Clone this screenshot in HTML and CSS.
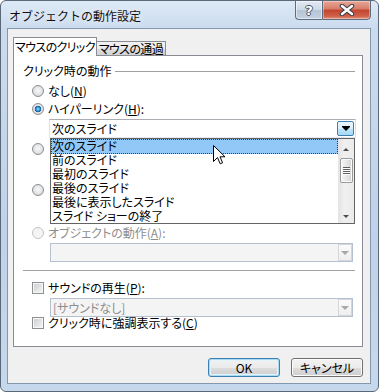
FILE: index.html
```html
<!DOCTYPE html>
<html lang="ja">
<head>
    <meta charset="UTF-8">
    <meta name="viewport" content="width=device-width, initial-scale=1.0">
    <title>オブジェクトの動作設定</title>
    <link rel="stylesheet" href="styles.css">
</head>
<body>
    <div class="window">
        <div class="titlebar">
            <span class="title">オブジェクトの動作設定</span>
            <div class="caption-buttons">
                <div class="cap-btn help">?</div>
                <div class="cap-btn close">
                    <svg width="16" height="12" viewBox="0 0 16 12">
                        <path d="M3 2 L13 10 M13 2 L3 10" stroke="#3a3f48" stroke-width="4.5" stroke-linecap="round"/>
                        <path d="M3 2 L13 10 M13 2 L3 10" stroke="#fff" stroke-width="2.4" stroke-linecap="round"/>
                    </svg>
                </div>
            </div>
        </div>

        <div class="client">
            <div class="tabs">
                <div class="tab active">マウスのクリック</div>
                <div class="tab">マウスの通過</div>
            </div>

            <div class="panel">
                <div class="group-head">
                    <span>クリック時の動作</span>
                    <span class="rule"></span>
                </div>

                <div class="option"><span class="radio"></span>なし(<u>N</u>)</div>
                <div class="option"><span class="radio checked"></span>ハイパーリンク(<u>H</u>):</div>
                <div class="combo focus">
                    <span class="combo-text">次のスライド</span>
                    <span class="combo-btn hot"><i class="arrow"></i></span>
                </div>

                <!-- these two rows sit under the open list -->
                <div class="option"><span class="radio"></span><span class="covered">プログラムの実行(R):</span></div>
                <div class="combo plain"></div>
                <div class="option"><span class="radio"></span><span class="covered">マクロの実行(M):</span></div>
                <div class="combo plain"></div>

                <div class="option disabled"><span class="radio"></span>オブジェクトの動作(<u>A</u>):</div>
                <div class="combo disabled">
                    <span class="combo-text"></span>
                    <span class="combo-btn"><i class="arrow"></i></span>
                </div>

                <div class="separator"></div>

                <div class="option"><span class="check"></span>サウンドの再生(<u>P</u>):</div>
                <div class="combo disabled">
                    <span class="combo-text">[サウンドなし]</span>
                    <span class="combo-btn"><i class="arrow"></i></span>
                </div>
                <div class="option short"><span class="check"></span>クリック時に強調表示する(<u>C</u>)</div>

                <!-- open dropdown of the hyperlink combo -->
                <div class="dropdown-list">
                    <ul class="items">
                        <li class="selected">次のスライド</li>
                        <li>前のスライド</li>
                        <li>最初のスライド</li>
                        <li>最後のスライド</li>
                        <li>最後に表示したスライド</li>
                        <li>スライド ショーの終了</li>
                    </ul>
                    <div class="scrollbar">
                        <div class="sb-arrow up"></div>
                        <div class="sb-thumb"><i></i><i></i><i></i><i></i></div>
                        <div class="sb-arrow down"></div>
                    </div>
                </div>
            </div>

            <div class="footer">
                <button class="btn default">OK</button>
                <button class="btn">キャンセル</button>
            </div>
        </div>

        <svg class="cursor" width="13" height="20" viewBox="0 0 13 20">
            <path d="M0.5 0.5 V16.5 L4.5 12.6 L7.2 18.8 L9.6 17.8 L7 11.8 H12 Z" fill="#fff" stroke="#000" stroke-width="1" stroke-linejoin="miter"/>
        </svg>
    </div>
</body>
</html>
```

FILE: styles.css
```css
body {
    margin: 0;
    background: #fff;
    font-family: "Noto Sans CJK JP", "Noto Sans", sans-serif;
    font-size: 12px;
    color: #000;
}
.window {
    position: relative;
    width: 379px;
    height: 392px;
    box-sizing: border-box;
    border: 1px solid #5b6878;
    border-radius: 6px;
    background: linear-gradient(180deg, #dde9f6 0%, #cbdbee 28px, #bfd2e9 60%, #c6d8ec 100%);
    padding: 0 7px 7px 6px;
    overflow: hidden;
}
.titlebar {
    display: flex;
    height: 27px;
}
.title {
    align-self: center;
    margin-left: 2px;
    margin-top: 2px;
    text-shadow: 0 0 6px rgba(255,255,255,0.9);
    color: #101010;
}
.caption-buttons {
    display: flex;
    margin-left: auto;
    margin-top: -1px;
}
.cap-btn {
    height: 20px;
    box-sizing: border-box;
    border: 1px solid #5f6c7d;
    display: flex;
    align-items: center;
    justify-content: center;
}
.help {
    width: 27px;
    border-right: none;
    border-bottom-left-radius: 4px;
    background: linear-gradient(180deg, #e3ebf4 0%, #ccd8e6 50%, #b5c4d6 50%, #c3d1e2 100%);
    box-shadow: inset 0 0 0 1px rgba(255,255,255,0.5);
    color: #fff;
    font-family: "DejaVu Sans", sans-serif;
    font-weight: bold;
    font-size: 13px;
    text-shadow: 1px 0 0 #4b5666, -1px 0 0 #4b5666, 0 1px 0 #4b5666, 0 -1px 0 #4b5666;
}
.close {
    width: 49px;
    border-bottom-right-radius: 4px;
    background: linear-gradient(180deg, #e8a695 0%, #d77c69 45%, #c2452e 50%, #d0614a 85%, #e39a84 100%);
    box-shadow: inset 0 0 0 1px rgba(255,255,255,0.35);
}
.client {
    height: 356px;
    box-sizing: border-box;
    border: 1px solid #8597ad;
    background: #f0f0f0;
    padding: 8px 7px 0 5px;
}
.tabs {
    display: flex;
    align-items: flex-end;
    height: 18px;
    font-feature-settings: "palt";
    letter-spacing: -0.6px;
    white-space: nowrap;
}
.tab {
    width: 69px;
    height: 14px;
    box-sizing: border-box;
    border: 1px solid #898c95;
    border-left: none;
    border-bottom: none;
    background: linear-gradient(180deg, #f2f2f2 0%, #ebebeb 50%, #dddddd 50%, #d2d2d2 100%);
    display: flex;
    align-items: center;
    justify-content: center;
    line-height: 12px;
    padding-top: 1px;
}
.tab.active {
    width: 84px;
    height: 19px;
    margin-bottom: -1px;
    border-left: 1px solid #898c95;
    background: #fff;
    position: relative;
    z-index: 1;
    padding-top: 0;
}
.panel {
    position: relative;
    height: 292px;
    box-sizing: border-box;
    border: 1px solid #898c95;
    background: #fff;
    font-feature-settings: "palt";
    line-height: 14px;
}
.group-head {
    display: flex;
    align-items: center;
    height: 14px;
    margin-top: 8px;
    padding-left: 9px;
    margin-right: 7px;
}
.rule {
    flex: 1;
    height: 1px;
    background: #a0a0a0;
    margin-left: 4px;
}
.option {
    display: flex;
    align-items: center;
    height: 18px;
    padding-left: 18px;
    white-space: nowrap;
}
.option.short {
    height: 12px;
}
.option u {
    text-decoration-thickness: 1px;
    text-underline-offset: 1px;
}
.option.disabled {
    color: #8d8d8d;
}
.covered {
    visibility: hidden;
}
.group-head + .option {
    margin-top: 4px;
}
.radio {
    width: 12px;
    height: 12px;
    box-sizing: border-box;
    border-radius: 50%;
    border: 1px solid #8c8e90;
    background: radial-gradient(circle at 50% 45%, #f8f8f8 0, #e2e4e6 55%, #c9cccf 100%);
    margin-right: 4px;
    flex: none;
}
.radio.checked {
    background:
        radial-gradient(circle at 50% 50%, #9fe2ff 0, #3a9de0 1.6px, #175c9b 3px, rgba(23,92,155,0) 3.6px),
        radial-gradient(circle at 50% 45%, #f8f8f8 0, #e2e4e6 55%, #c9cccf 100%);
}
.option.disabled .radio {
    border-color: #c4c4c4;
    background: #f4f4f4;
}
.check {
    width: 12px;
    height: 12px;
    box-sizing: border-box;
    border: 1px solid #8e8f8f;
    background: linear-gradient(135deg, #c9cdd2, #f6f6f6);
    box-shadow: inset 0 0 0 1px #f7f7f7;
    margin-right: 4px;
    flex: none;
}
.combo {
    display: flex;
    align-items: center;
    height: 19px;
    width: 303px;
    box-sizing: border-box;
    margin-left: 36px;
    border: 1px solid #abadb3;
    border-color: #abadb3 #dbdfe6 #e3e9ef #e2e3ea;
    background: #fff;
    margin-top: 1px;
}
.combo.focus {
    width: 307px;
    margin-left: 35px;
}
.combo-text {
    padding-left: 2px;
    white-space: nowrap;
}
.combo-btn {
    margin-left: auto;
    width: 14px;
    height: 17px;
    box-sizing: border-box;
    border: 1px solid #d4d6da;
    background: linear-gradient(180deg, #fbfbfb, #eeeeee);
    display: flex;
    align-items: center;
    justify-content: center;
}
.combo-btn.hot {
    width: 17px;
    height: 15px;
    margin-right: 1px;
    border: 1px solid #3c7fb1;
    border-radius: 2px;
    background: linear-gradient(180deg, #eaf6fd 0%, #d9f0fc 50%, #bee6fd 50%, #a7d9f5 100%);
}
.arrow {
    width: 0;
    height: 0;
    border-left: 4px solid transparent;
    border-right: 4px solid transparent;
    border-top: 4px solid #a8a8a8;
    margin-top: 1px;
}
.combo-btn.hot .arrow {
    border-top-color: #000;
    box-shadow: 0 -1px 0 #000;
}
.combo.disabled {
    background: #f4f4f4;
    border-color: #b5c1cf;
    color: #8d8d8d;
}
.combo + .option {
    margin-top: 2px;
}
.combo.plain + .option {
    margin-top: 3px;
}
.combo.plain + .option.disabled {
    margin-top: 5px;
}
.separator {
    height: 1px;
    background: #a0a0a0;
    margin: 8px 7px 0 9px;
}
.separator + .option {
    margin-top: 8px;
}
.combo + .option.short {
    margin-top: 0;
}
.dropdown-list {
    position: absolute;
    left: 36px;
    top: 82px;
    width: 305px;
    height: 86px;
    box-sizing: border-box;
    border: 1px solid #646464;
    background: #fff;
    display: flex;
}
.items {
    list-style: none;
    margin: 0;
    padding: 0;
    width: 287px;
}
.items li {
    height: 14px;
    line-height: 14px;
    padding-left: 1px;
    white-space: nowrap;
}
.items li.selected {
    background: #91c8f8;
    outline: 1px dotted #4a3a2a;
    outline-offset: -1px;
    height: 15px;
    margin-bottom: -1px;
}
.scrollbar {
    width: 16px;
    background: linear-gradient(90deg, #e3e3e3, #f0f0f0 40%, #ebebeb);
    display: flex;
    flex-direction: column;
    align-items: center;
}
.sb-arrow {
    height: 16px;
    width: 16px;
    display: flex;
    align-items: center;
    justify-content: center;
}
.sb-arrow::before {
    content: "";
    border-left: 3px solid transparent;
    border-right: 3px solid transparent;
}
.sb-arrow.up::before {
    border-bottom: 3px solid #4d4d4d;
    margin-top: 4px;
}
.sb-arrow.down {
    margin-top: auto;
}
.sb-arrow.down::before {
    border-top: 3px solid #4d4d4d;
    margin-top: 2px;
}
.sb-thumb {
    width: 13px;
    height: 25px;
    margin-top: 3px;
    box-sizing: border-box;
    border: 1px solid #9a9a9a;
    border-radius: 2px;
    background: linear-gradient(90deg, #f6f6f6, #e6e6e6 50%, #d4d4d4);
    box-shadow: inset 0 0 0 1px #fbfbfb;
    display: flex;
    flex-direction: column;
    align-items: center;
    justify-content: center;
    gap: 1px;
}
.sb-thumb i {
    width: 7px;
    height: 1px;
    background: #5f5f5f;
    box-shadow: 0 1px 0 #fff;
}
.footer {
    display: flex;
    justify-content: flex-end;
    gap: 11px;
    margin-top: 11px;
}
.btn {
    width: 72px;
    height: 19px;
    padding: 0;
    border: 1px solid #707070;
    border-radius: 3px;
    background: linear-gradient(180deg, #f2f2f2 0%, #ebebeb 50%, #dddddd 50%, #cfcfcf 100%);
    box-shadow: inset 0 0 0 1px #fcfcfc;
    font: inherit;
    font-feature-settings: "palt";
    line-height: 14px;
    color: #000;
}
.btn.default {
    border-color: #3c7fb1;
    box-shadow: inset 0 0 0 1px #a9dcf4, inset 0 0 0 2px #e3f3fb;
}
.cursor {
    position: absolute;
    left: 212px;
    top: 144px;
}
```
